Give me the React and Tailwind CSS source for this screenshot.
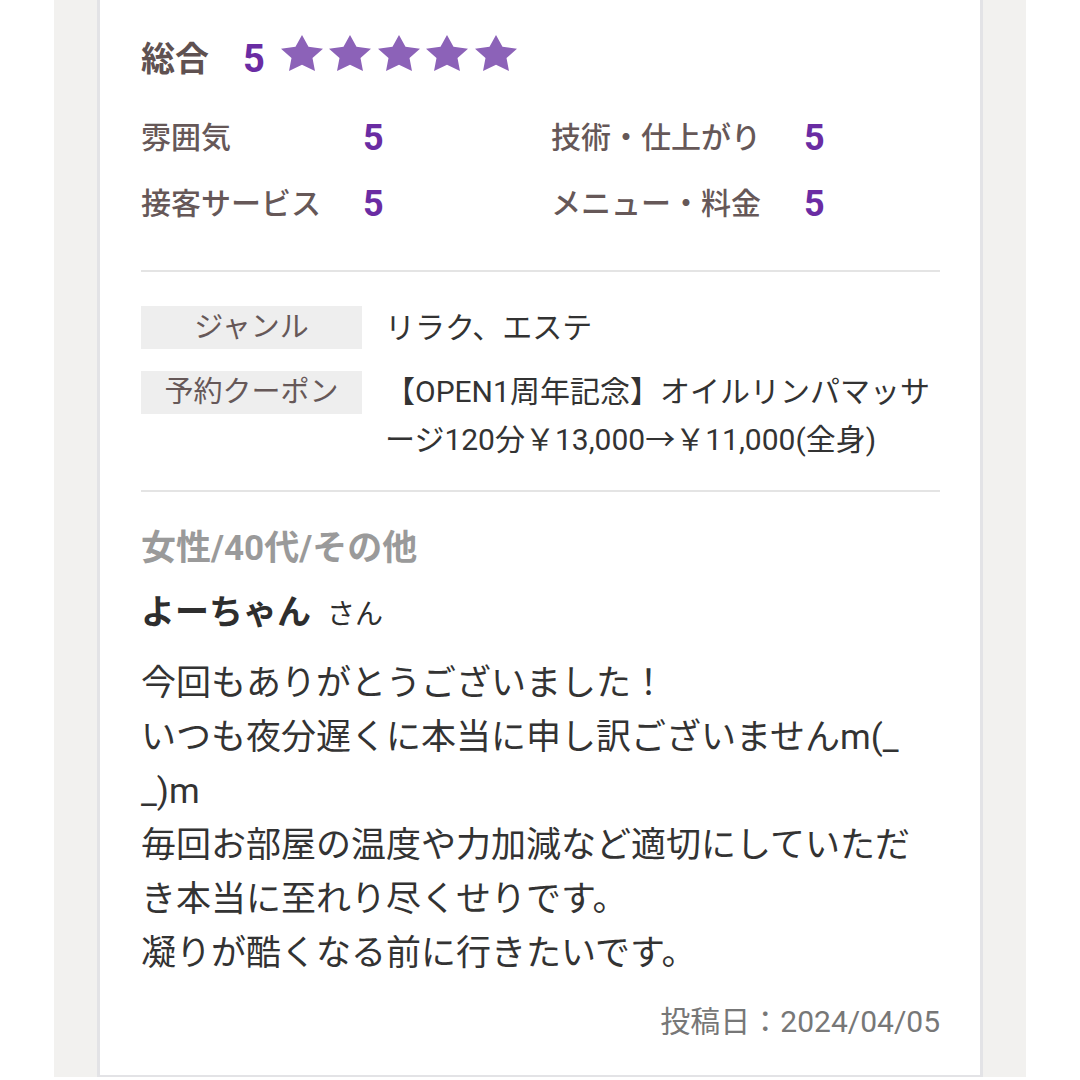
import React from "react";

const STAR = "M12 2l3.09 6.26L22 9.27l-5 4.87 1.18 6.88L12 17.77l-6.18 3.25L7 14.14 2 9.27l6.91-1.01L12 2z";

function Star() {
  return (
    <svg width="42" height="36" viewBox="2 2 20 19.02" preserveAspectRatio="none" className="block">
      <path d={STAR} fill="#8c62b8" />
    </svg>
  );
}

function Score({ label, labelW }) {
  return (
    <div className="flex items-center h-[36px]">
      <span className={`${labelW} text-[30px] leading-[36px] font-medium text-[#665858]`}>{label}</span>
      <span className="text-[36px] leading-[36px] font-bold text-[#6a2ca3]">5</span>
    </div>
  );
}

export default function App() {
  const lines = [
    "今回もありがとうございました！",
    "いつも夜分遅くに本当に申し訳ございませんm(_ _)m",
    "毎回お部屋の温度や力加減など適切にしていただき本当に至れり尽くせりです。",
    "凝りが酷くなる前に行きたいです。",
  ];
  return (
    <div className="w-[1080px] h-[1080px] bg-white overflow-hidden font-[Roboto,'Noto_Sans_CJK_JP',sans-serif]">
      <div className="ml-[54px] w-[972px] h-[1077px] bg-[#f2f1ef] px-[43px]">
        <div className="w-[886px] h-[1077px] bg-white border-x-[3px] border-b-[2px] border-[#e3e3e6] pl-[41px] pr-[40px] pt-[39px]">
          {/* overall */}
          <div className="flex items-center h-[40px]">
            <span className="text-[34px] leading-[40px] font-bold text-[#5f5151]">総合</span>
            <span className="ml-[34px] text-[38px] leading-[40px] font-bold text-[#6a2ca3]">5</span>
            <div className="ml-[16px] mb-[12px] flex gap-[6.5px]">
              <Star />
              <Star />
              <Star />
              <Star />
              <Star />
            </div>
          </div>

          {/* sub scores */}
          <div className="mt-[41px] grid grid-cols-[410px_1fr] gap-y-[30px]">
            <Score label="雰囲気" labelW="w-[222px]" />
            <Score label="技術・仕上がり" labelW="w-[253px]" />
            <Score label="接客サービス" labelW="w-[222px]" />
            <Score label="メニュー・料金" labelW="w-[253px]" />
          </div>

          <div className="mt-[48px] h-[2px] bg-[#e4e4e4]" />

          {/* info table */}
          <div className="mt-[34px] flex">
            <div className="w-[221px] h-[43px] bg-[#eeeeee] text-center text-[29px] leading-[43px] text-[#665858]">ジャンル</div>
            <div className="ml-[23px] text-[30px] leading-[43px] text-[#333333]">リラク、エステ</div>
          </div>
          <div className="mt-[19px] flex items-start">
            <div className="mt-[3px] shrink-0 w-[221px] h-[43px] bg-[#eeeeee] text-center text-[29px] leading-[43px] text-[#665858]">予約クーポン</div>
            <div className="ml-[23px] flex-1 text-[30px] leading-[48px] text-[#333333]">【OPEN1周年記念】オイルリンパマッサージ120分￥13,000→￥11,000(全身)</div>
          </div>

          <div className="mt-[26px] h-[2px] bg-[#e4e4e4]" />

          {/* review */}
          <div className="mt-[37px] text-[35px] leading-[40px] font-bold text-[#9a9a9a]">女性/40代/その他</div>
          <div className="mt-[23px] leading-[40px] text-[#2e2e2e]">
            <span className="text-[34px] font-bold">よーちゃん</span>
            <span className="ml-[16px] text-[28px]">さん</span>
          </div>
          <div className="mt-[18px] text-[35px] leading-[54px] text-[#333333]">
            {lines.map((l, i) => (
              <p key={i}>{l}</p>
            ))}
          </div>
          <div className="mt-[21px] text-right text-[30px] leading-[40px] text-[#777777]">投稿日：2024/04/05</div>
        </div>
      </div>
    </div>
  );
}
